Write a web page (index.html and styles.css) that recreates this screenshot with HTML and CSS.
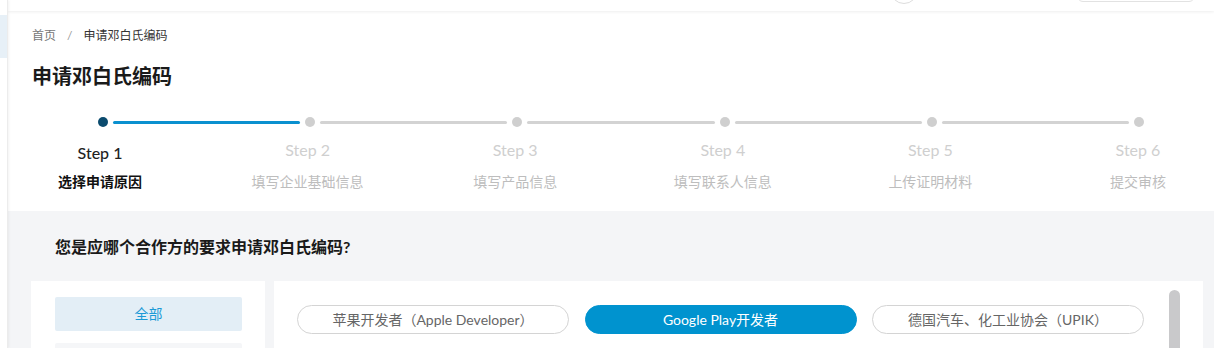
FILE: index.html
```html
<!DOCTYPE html>
<html lang="zh-CN">

<head>
    <meta charset="UTF-8" />
    <meta name="viewport" content="width=device-width, initial-scale=1.0" />
    <title>申请邓白氏编码</title>
    <link rel="stylesheet" href="styles.css">
</head>

<body>
    <aside class="sidebar">
        <div class="sideActive"></div>
    </aside>
    <div class="main">
        <header class="topbar">
            <div class="avatar"></div>
            <div class="searchBox"></div>
        </header>

        <div class="pageHead">
            <div class="breadcrumb">
                <span class="crumbLink">首页</span>
                <span class="crumbSep">/</span>
                <span class="crumbCur">申请邓白氏编码</span>
            </div>
            <h1 class="pageTitle">申请邓白氏编码</h1>

            <div class="stepDots">
                <span class="dot dotCur"></span>
                <span class="tail tailDone"></span>
                <span class="dot"></span>
                <span class="tail"></span>
                <span class="dot"></span>
                <span class="tail"></span>
                <span class="dot"></span>
                <span class="tail"></span>
                <span class="dot"></span>
                <span class="tail"></span>
                <span class="dot"></span>
            </div>
            <div class="stepLabels">
                <div class="step stepCur">
                    <div class="stepNo">Step 1</div>
                    <div class="stepName">选择申请原因</div>
                </div>
                <div class="step">
                    <div class="stepNo">Step 2</div>
                    <div class="stepName">填写企业基础信息</div>
                </div>
                <div class="step">
                    <div class="stepNo">Step 3</div>
                    <div class="stepName">填写产品信息</div>
                </div>
                <div class="step">
                    <div class="stepNo">Step 4</div>
                    <div class="stepName">填写联系人信息</div>
                </div>
                <div class="step">
                    <div class="stepNo">Step 5</div>
                    <div class="stepName">上传证明材料</div>
                </div>
                <div class="step">
                    <div class="stepNo">Step 6</div>
                    <div class="stepName">提交审核</div>
                </div>
            </div>
        </div>

        <div class="reasonSection">
            <h2 class="question">您是应哪个合作方的要求申请邓白氏编码?</h2>
            <div class="panels">
                <div class="catPanel">
                    <div class="catItem catActive">全部</div>
                    <div class="catItem"></div>
                </div>
                <div class="partnerPanel">
                    <div class="chipList">
                        <div class="chip">苹果开发者（Apple Developer）</div>
                        <div class="chip chipActive">Google Play开发者</div>
                        <div class="chip">德国汽车、化工业协会（UPIK）</div>
                    </div>
                    <div class="scrollThumb"></div>
                </div>
            </div>
        </div>
    </div>
</body>

</html>
```

FILE: styles.css
```css
html,
body {
    margin: 0;
    height: 100%;
    overflow: hidden;
}

body {
    display: flex;
    background-color: #fff;
    font-family: Lato, "Noto Sans CJK SC", sans-serif;
    color: #333;
}

.sidebar {
    width: 7px;
    flex-shrink: 0;
    background-color: #fff;
    border-right: 1px solid #ececec;
    box-shadow: 1px 0 3px rgba(0, 0, 0, 0.05);
    position: relative;
    z-index: 2;
}

.sideActive {
    margin-top: 15px;
    height: 43px;
    background-color: #e7f0f7;
}

.main {
    flex: 1;
    display: flex;
    flex-direction: column;
    min-width: 0;
}

.topbar {
    height: 11px;
    flex-shrink: 0;
    display: flex;
    justify-content: flex-end;
    align-items: flex-start;
    padding-right: 19px;
    overflow: hidden;
    background-color: #fff;
    box-shadow: 0 1px 3px rgba(0, 0, 0, 0.07);
    position: relative;
    z-index: 1;
}

.avatar {
    width: 26px;
    height: 26px;
    margin-top: -24px;
    border: 1px solid #ddd;
    border-radius: 50%;
    margin-right: 159px;
}

.searchBox {
    width: 116px;
    height: 30px;
    margin-top: -30px;
    border: 1px solid #e2e2e2;
    border-radius: 6px;
}

.pageHead {
    background-color: #fff;
    padding: 18px 0 20px 24px;
}

.breadcrumb {
    font-size: 12px;
    line-height: 14px;
    display: flex;
    gap: 11px;
}

.crumbLink {
    color: #777;
}

.crumbSep {
    color: #999;
}

.crumbCur {
    color: #333;
}

.pageTitle {
    margin: 19px 0 0 0;
    font-size: 20px;
    line-height: 28px;
    font-weight: bold;
    color: #1a1a1a;
}

.stepDots {
    display: flex;
    align-items: center;
    gap: 5px;
    margin: 27px 0 0 66px;
    width: 1046px;
}

.dot {
    width: 10px;
    height: 10px;
    flex-shrink: 0;
    border-radius: 50%;
    background-color: #cfcfcf;
}

.dotCur {
    background-color: #0b4b6e;
}

.tail {
    flex: 1;
    height: 3px;
    border-radius: 2px;
    background-color: #d3d3d3;
}

.tailDone {
    background-color: #0a90cf;
}

.stepLabels {
    display: grid;
    grid-template-columns: repeat(6, 160px);
    column-gap: 47.6px;
    margin: 13px 0 0 -12px;
    text-align: center;
}

.stepNo {
    font-size: 16px;
    line-height: 20px;
    color: #cfcfcf;
}

.stepName {
    margin-top: 12px;
    font-size: 14px;
    line-height: 19px;
    color: #bdbdbd;
}

.stepCur .stepNo {
    color: #222;
    padding-top: 3px;
    margin-bottom: -3px;
    font-weight: 500;
}

.stepCur .stepName {
    color: #111;
    font-weight: bold;
}

.reasonSection {
    flex: 1;
    min-height: 0;
    background-color: #f4f5f7;
    padding: 25px 11px 0 23px;
}

.question {
    margin: 0 0 23px 24px;
    font-size: 16px;
    line-height: 22px;
    font-weight: bold;
    color: #1a1a1a;
}

.panels {
    display: flex;
    gap: 9px;
    height: 67px;
    overflow: hidden;
}

.catPanel {
    width: 234px;
    flex-shrink: 0;
    background-color: #fff;
    padding: 16px 23px 0 24px;
    box-sizing: border-box;
    display: flex;
    flex-direction: column;
    gap: 12px;
}

.catItem {
    height: 34px;
    flex-shrink: 0;
    line-height: 34px;
    text-align: center;
    font-size: 14px;
    border-radius: 2px;
    background-color: #f5f6f8;
}

.catActive {
    background-color: #e3eef6;
    color: #1b9ad6;
}

.partnerPanel {
    flex: 1;
    display: flex;
    background-color: #fff;
    padding: 0 23px;
}

.chipList {
    flex: 1;
    display: flex;
    flex-wrap: wrap;
    align-content: flex-start;
    gap: 16px 15.5px;
    padding-top: 24px;
}

.chip {
    width: 272px;
    height: 29px;
    box-sizing: border-box;
    border: 1px solid #d4d4d4;
    border-radius: 15px;
    line-height: 27px;
    text-align: center;
    font-size: 14px;
    color: #666;
}

.chipActive {
    background-color: #0093cf;
    border-color: #0093cf;
    color: #fff;
}

.scrollThumb {
    width: 11px;
    margin-top: 9px;
    height: 58px;
    border-radius: 6px 6px 0 0;
    background-color: #c9c9cb;
}
```
